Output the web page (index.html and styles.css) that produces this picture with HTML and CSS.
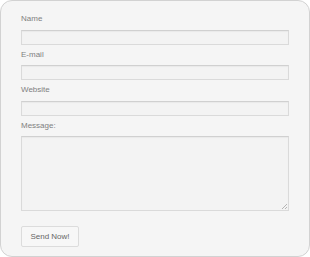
FILE: index.html
```html
<!DOCTYPE html>
<html lang="en">
  <head>
    <meta charset="utf-8" />
    <title>Contact</title>
    <link rel="stylesheet" href="styles.css">
  </head>
  <body>
    <form class="contact-form">
      <label for="name">Name</label>
      <input type="text" id="name" class="field">

      <label for="email">E-mail</label>
      <input type="text" id="email" class="field">

      <label for="website">Website</label>
      <input type="text" id="website" class="field">

      <label for="message">Message:</label>
      <div class="message-wrap">
        <textarea id="message" class="field message"></textarea>
      </div>

      <button type="button" class="send-btn">Send Now!</button>
    </form>
  </body>
</html>
```

FILE: styles.css
```css
body {
  margin: 0;
  font-family: "Liberation Sans", Arial, sans-serif;
  background-color: #fff;
}
.contact-form {
  width: 310px;
  height: 257px;
  box-sizing: border-box;
  border: 1px solid #d2d2d2;
  border-radius: 12px;
  background-color: #f5f5f5;
  padding: 13px 20px 0 20px;
  display: flex;
  flex-direction: column;
  align-items: flex-start;
}
.contact-form label {
  font-size: 8px;
  line-height: 10.5px;
  color: #808080;
  margin-bottom: 5px;
}
.field {
  width: 268px;
  height: 15px;
  box-sizing: border-box;
  margin: 0 0 5px 0;
  padding: 0;
  border: 1px solid #dadada;
  border-top-color: #d0d0d0;
  background-color: #f3f3f3;
  box-shadow: inset 0 1px 1px rgba(0, 0, 0, 0.04);
  font-family: inherit;
}
.message-wrap {
  position: relative;
  margin-bottom: 15px;
}
.message {
  display: block;
  height: 75px;
  margin: 0;
  resize: none;
}
/* little resize grip */
.message-wrap::after {
  content: "";
  position: absolute;
  right: 2px;
  bottom: 2px;
  width: 5px;
  height: 5px;
  background: linear-gradient(135deg, transparent 40%, #b5b5b5 40%, #b5b5b5 55%, transparent 55%, transparent 70%, #b5b5b5 70%, #b5b5b5 85%, transparent 85%);
}
.send-btn {
  width: 58px;
  height: 21px;
  padding: 0;
  border: 1px solid #dcdcdc;
  border-radius: 2px;
  background-color: #f7f7f7;
  font-family: inherit;
  font-size: 8px;
  color: #666;
}
```
